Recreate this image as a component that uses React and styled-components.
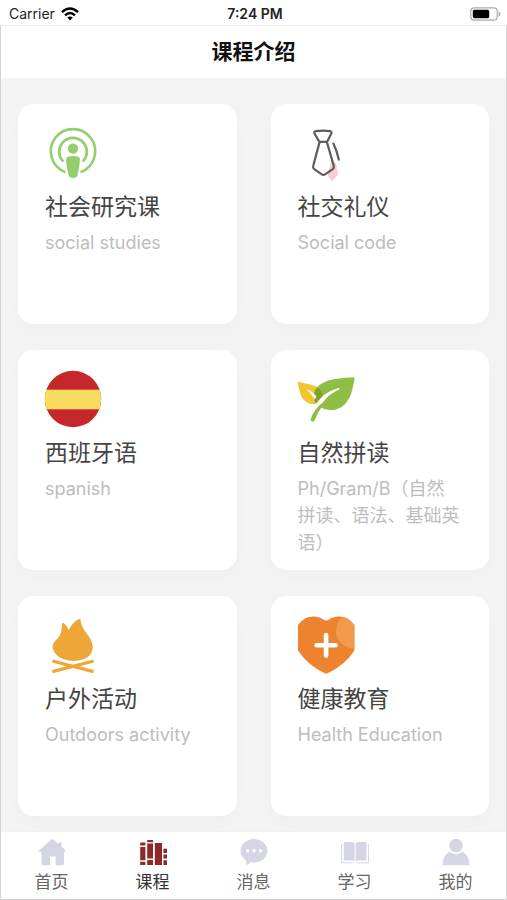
import React, { useState } from 'react'
import styled, { createGlobalStyle } from 'styled-components'

const GlobalStyle = createGlobalStyle`
    * {
        box-sizing: border-box;
    }

    body {
        margin: 0;
        background: #fff;
        font-family: Inter, 'Noto Sans CJK SC', sans-serif;
    }
`

const Screen = styled.div`
    display: flex;
    flex-direction: column;
    min-height: 100vh;
`

const StatusBar = styled.div`
    display: grid;
    grid-template-columns: 1fr auto 1fr;
    align-items: center;
    height: 25px;
    padding: 2px 6px 0 9px;
    font-size: 14px;
    color: #222;
`

const Network = styled.div`
    display: flex;
    align-items: center;
    gap: 6px;
`

const Clock = styled.time`
    font-weight: 600;
`

const Battery = styled.svg`
    justify-self: end;
`

const Page = styled.div`
    display: flex;
    flex-direction: column;
    flex: 1;
    border: 1px solid #d4d4d4;
    border-top-color: #ececec;
`

const Header = styled.header`
    display: flex;
    justify-content: center;
    align-items: center;
    height: 52px;
    padding-bottom: 4px;
    background: #fff;
`

const HeaderTitle = styled.h1`
    margin: 0;
    font-size: 21px;
    font-weight: 600;
    color: #111;
`

const CourseGrid = styled.main`
    flex: 1;
    display: grid;
    grid-template-columns: 1fr 1fr;
    align-content: start;
    gap: 26px 34px;
    padding: 26px 17px 14px;
    background: #f3f3f3;
`

const Card = styled.article`
    min-height: 220px;
    padding: 21px 27px 14px;
    border-radius: 15px;
    background: #fff;
    box-shadow: 0 6px 16px rgba(0, 0, 0, 0.02);
`

const CardIcon = styled.svg`
    display: block;
    width: 56px;
    height: 56px;
    overflow: visible;
`

const CardTitle = styled.h2`
    margin: 10px 0 6px;
    font-size: 23px;
    line-height: 32px;
    font-weight: 400;
    color: #444;
`

const CardText = styled.p`
    margin: 0;
    font-size: 18px;
    line-height: 27px;
    color: #bdbdbd;
`

const TabBar = styled.nav`
    display: grid;
    grid-template-columns: repeat(5, 1fr);
    height: 68px;
    border-top: 1px solid #f0f0f0;
    background: #fff;
`

const Tab = styled.a`
    display: flex;
    flex-direction: column;
    align-items: center;
    gap: 4px;
    padding-top: 6px;
    font-size: 17px;
    line-height: 24px;
    text-decoration: none;
    color: ${props => (props.$active ? '#333' : '#666')};
`

const TabIcon = styled.svg`
    width: 28px;
    height: 28px;
    fill: ${props => (props.$active ? '#8c2a2a' : '#d5d6e3')};
`

const courses = [
    {
        title: '社会研究课',
        text: 'social studies',
        icon: (
            <g fill='#93cf6c'>
                <path d='M20.4 47.2A22.2 22.2 0 1 1 35.6 47.2' fill='none' stroke='#93cf6c' strokeWidth='2.6' />
                <path d='M18.4 36.6A13.8 13.8 0 1 1 37.6 36.6' fill='none' stroke='#93cf6c' strokeWidth='2.8' />
                <circle cx='28' cy='23.7' r='5.1' />
                <path d='M21.2 33.6Q21.4 31 28 31T34.8 33.6Q35 40 32.4 50.6Q31.8 53 28 53T23.6 50.6Q21 40 21.2 33.6Z' />
            </g>
        ),
    },
    {
        title: '社交礼仪',
        text: 'Social code',
        icon: (
            <g fill='none' stroke='#5c5c5c' strokeWidth='2.2' strokeLinejoin='round' strokeLinecap='round'>
                <path d='M33.4 35L29.6 51L34.2 56L40 49.5L38 38.5Z' fill='#f6cdd0' stroke='none' />
                <path d='M17.4 6.2Q25 5 32.4 6.2Q34 6.6 33.4 8.2L29.8 15.6Q29 16.8 27.8 16.8H22.4Q21.2 16.8 20.6 15.6L16.4 8.2Q15.8 6.6 17.4 6.2Z' />
                <path d='M21.5 17.4L15.2 41Q14.6 43 16.2 44.2L23.8 49.4Q25.4 50.4 27 49.4L34.8 44.2Q36.4 43 35.8 41L29 17.4' />
                <path d='M35.4 18.6Q38.8 25.6 40.8 34.6' />
            </g>
        ),
    },
    {
        title: '西班牙语',
        text: 'spanish',
        icon: (
            <g>
                <clipPath id='flag'>
                    <circle cx='28' cy='28' r='28.2' />
                </clipPath>
                <g clipPath='url(#flag)'>
                    <rect x='-1' y='-1' width='58' height='58' fill='#c5272b' />
                    <rect x='-1' y='18.7' width='58' height='19.6' fill='#f7dc5e' />
                </g>
            </g>
        ),
    },
    {
        title: '自然拼读',
        text: 'Ph/Gram/B（自然拼读、语法、基础英语）',
        icon: (
            <g>
                <path d='M-0.2 11.8Q-0.2 10.4 1.2 10.8C6 13.2 13.6 12.6 19.6 16.4C24.6 20 26.4 25.6 22.4 30.4Q17 34.4 11.2 32.4C2.4 29 1.6 20.6 -0.2 11.8Z' fill='#f2c632' />
                <path d='M55 6.3Q57 6.2 56.6 8C54.6 15.8 54.4 24 48.4 31.4C41.6 39.8 31.6 40.8 22.4 36.6L17.2 31.4C13.8 24.4 16.8 16 24.6 12C33.4 7.4 45.2 7.2 55 6.3Z' fill='#8fbe46' />
                <path d='M17.2 31.4C14.4 25.6 16 19.4 19.6 16.4C24.6 20 26.4 25.6 22.4 30.4Q19.8 32.2 17.2 31.4Z' fill='#83a02a' />
                <path d='M8.6 18.4Q13.6 19.6 18.4 25.2L16.8 28.4Q13.6 22.6 8.6 18.4Z' fill='#fff' />
                <path d='M40.8 16.9Q42.4 17.6 41 18.6C32.6 22.4 27 27.6 22.6 35L18 37L16.2 35.6C22.6 25.4 29.8 19.8 40.8 16.9Z' fill='#fff' />
                <path d='M25.4 31.2L23.4 36.6Q19.6 41.4 16.6 49.4Q15.8 51 14 50.4Q12.2 49.8 12.8 47.8C15.4 40.6 19.6 34.8 25.4 31.2Z' fill='#8fbe46' />
            </g>
        ),
    },
    {
        title: '户外活动',
        text: 'Outdoors activity',
        icon: (
            <g fill='#efa638'>
                <path d='M17.2 6.8Q17.4 5.2 18.8 6.2Q22 8.6 23.8 13Q27.4 5.4 33.8 2.2Q35.2 1.4 35.6 3C36.6 11.8 40.8 14.4 44.6 20.8C48.8 27.2 48.6 33.4 45 38Q39.6 43.8 27.8 44Q16.6 43.6 11.2 37.6Q6 31.6 8.4 26.4C11.4 22 15.6 20 16.4 13.6Q16.8 10 17.2 6.8Z' />
                <path d='M7.4 44L48.6 54.6M7.4 54.6L48.6 44' stroke='#efa638' strokeWidth='3.2' />
            </g>
        ),
    },
    {
        title: '健康教育',
        text: 'Health Education',
        icon: (
            <g>
                <clipPath id='heart'>
                    <path d='M0 8Q6.4 -0.4 15.4 -0.4Q21.6 -0.2 25.6 2.8Q28.2 4.4 30.8 2.8Q34.8 -0.2 41 -0.4Q50 -0.4 56.4 8V33.4Q47.6 47.6 29.6 56.2Q28.2 56.8 26.8 56.2Q8.8 47.6 0 33.4Z' />
                </clipPath>
                <g clipPath='url(#heart)'>
                    <rect y='-1' width='57' height='58' fill='#ee832f' />
                    <circle cx='55.6' cy='13.8' r='17.6' fill='#f09a4d' />
                </g>
                <path d='M28.1 18V38.6M18.6 28.3H37.6' stroke='#fff' strokeWidth='4.6' strokeLinecap='round' />
            </g>
        ),
    },
]

const tabs = [
    {
        label: '首页',
        icon: (
            <path d='M13.4 1.4Q14.3 0.6 15.2 1.4L20.6 6V4.6H23.6V8.6L27.6 12.4Q28 13.8 26.6 13.8H26V25.6Q26 27.2 24.4 27.2H17.6V18.6H12V27.2H5Q3.4 27.2 3.4 25.6V13.8H2Q0.4 13.8 1 12.4Z' />
        ),
    },
    {
        label: '课程',
        icon: (
            <path d='M1.2 4.4h5.2v3.2H1.2zM1.2 9h5.2v13.2H1.2zM1.2 23.8h5.2V27H1.2zM8.2 2h5.8v2.2H8.2zM8.2 5.6H14v15H8.2zM8.2 22H14v5H8.2zM15.8 5H23v22h-7.2zM24.4 10.8H28v4.2h-3.6zM24.4 16.6H28v4h-3.6zM24.4 22.2H28V27h-3.6z' />
        ),
    },
    {
        label: '消息',
        icon: (
            <g>
                <path d='M14 1C21.6 1 27.4 6.2 27.4 12.8S21.6 24.6 14 24.6Q12.2 24.6 10.8 24.2Q8.8 26.4 6 27Q6.8 24.6 6 22.4Q0.6 18.8 0.6 12.8C0.6 6.2 6.4 1 14 1Z' />
                <g fill='#fff'>
                    <circle cx='7.6' cy='12.8' r='1.7' />
                    <circle cx='14' cy='12.8' r='1.7' />
                    <circle cx='20.4' cy='12.8' r='1.7' />
                </g>
            </g>
        ),
    },
    {
        label: '学习',
        icon: (
            <g>
                <path d='M2.8 4H10Q12.6 4 13.6 5.2V23.4Q12.6 22.6 10 22.6H2.8Z' />
                <path d='M25.4 4H18.2Q15.6 4 14.6 5.2V23.4Q15.6 22.6 18.2 22.6H25.4Z' />
                <path d='M1.8 6.4H0.6V24.8H12.6M26.4 6.4H27.6V24.8H15.6' fill='none' stroke='#d5d6e3' strokeWidth='1' />
            </g>
        ),
    },
    {
        label: '我的',
        icon: (
            <g>
                <circle cx='14' cy='7.6' r='6.8' />
                <path d='M7.4 13.8Q14 18.6 20.6 13.8Q27.2 17.4 27.4 27.2H0.6Q0.8 17.4 7.4 13.8Z' />
            </g>
        ),
    },
]

const CourseCard = props => {
    return (
        <Card>
            <CardIcon viewBox='0 0 56 56' aria-hidden='true'>{props.icon}</CardIcon>
            <CardTitle>{props.title}</CardTitle>
            <CardText>{props.text}</CardText>
        </Card>
    )
}

const App = () => {
    const [activeTab, setActiveTab] = useState('课程')

    return (
        <Screen>
            <GlobalStyle />
            <StatusBar>
                <Network>
                    <span>Carrier</span>
                    <svg width='18' height='14' viewBox='0 0 18 14' aria-hidden='true'>
                        <g fill='none' stroke='#000' strokeWidth='2.4'>
                            <path d='M1 5.2Q9 -2 17 5.2' />
                            <path d='M4 8.4Q9 3.8 14 8.4' />
                        </g>
                        <path d='M9 13.4L6.2 10.6Q9 8.2 11.8 10.6Z' />
                    </svg>
                </Network>
                <Clock>7:24 PM</Clock>
                <Battery width='31' height='14' viewBox='0 0 31 14' aria-hidden='true'>
                    <rect x='0.8' y='0.8' width='26.4' height='12.4' rx='3.4' fill='none' stroke='#aaa' strokeWidth='1.2' />
                    <rect x='2.8' y='2.8' width='16.4' height='8.4' rx='1.6' />
                    <path d='M28.6 4.6Q30.6 5.4 30.6 7T28.6 9.4Z' fill='#aaa' />
                </Battery>
            </StatusBar>

            <Page>
                <Header>
                    <HeaderTitle>课程介绍</HeaderTitle>
                </Header>

                <CourseGrid>
                    {courses.map(course => (
                        <CourseCard key={course.title} {...course} />
                    ))}
                </CourseGrid>

                <TabBar>
                    {tabs.map(tab => (
                        <Tab
                            key={tab.label}
                            href='#'
                            $active={tab.label === activeTab}
                            onClick={event => {
                                event.preventDefault();
                                setActiveTab(tab.label)
                            }}
                        >
                            <TabIcon viewBox='0 0 28 28' aria-hidden='true' $active={tab.label === activeTab}>
                                {tab.icon}
                            </TabIcon>
                            {tab.label}
                        </Tab>
                    ))}
                </TabBar>
            </Page>
        </Screen>
    )
}

export default App;
